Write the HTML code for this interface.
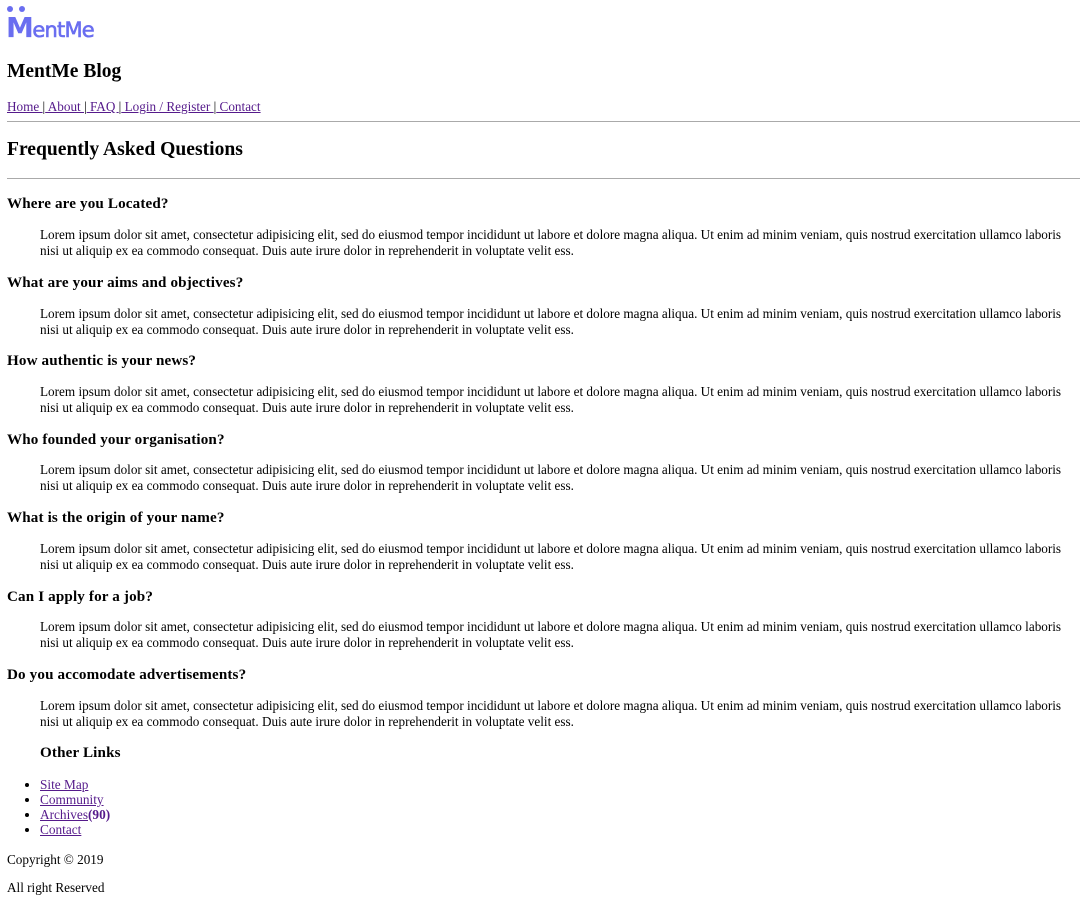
<!DOCTYPE html>
<html><head><meta charset="utf-8"><style>
body{margin:0;background:#fff;font-family:"Liberation Serif",serif;color:#000;font-size:13px;}
.a{position:absolute;white-space:nowrap;line-height:16px;}
a{color:#551a8b;}
.h{position:absolute;left:7px;white-space:nowrap;line-height:16px;font-size:15.1px;font-weight:bold;letter-spacing:0.15px}
.p{position:absolute;left:40px;width:1030px;line-height:15.5px;font-size:13.2px;}
hr{position:absolute;left:7px;width:1073px;margin:0;border:0;border-top:1px solid #aaa;height:0;}
ul{position:absolute;left:0;top:777px;margin:0;padding-left:40px;line-height:15px;font-size:13.3px;}
</style></head><body>
<div class="a" style="left:6px;top:4px;width:95px;height:40px;">
<span style="position:absolute;left:1px;top:2px;width:6px;height:6px;border-radius:50%;background:#6a6ef0"></span>
<span style="position:absolute;left:13px;top:2px;width:6px;height:6px;border-radius:50%;background:#6a6ef0"></span>
<span style="position:absolute;left:0;top:7px;font-family:'DejaVu Sans',sans-serif;font-weight:bold;font-size:28px;line-height:34px;color:#6a6ef0;letter-spacing:-1.5px">M<span style="font-weight:normal;font-size:21px;letter-spacing:-0.8px;-webkit-text-stroke:0.6px #6a6ef0">entMe</span></span>
</div>
<div class="a" style="left:7px;top:61px;font-size:19.5px;line-height:22px;font-weight:bold">MentMe Blog</div>
<div class="a" style="left:7px;top:99px;font-size:13.2px"><a href="#">Home </a>|<a href="#"> About </a>|<a href="#"> FAQ </a>|<a href="#"> Login / Register </a>|<a href="#"> Contact</a></div>
<hr style="top:121px">
<div class="a" style="left:7px;top:139px;font-size:19.6px;line-height:22px;font-weight:bold">Frequently Asked Questions</div>
<hr style="top:178px">

<div class="h" style="top:196px">Where are you Located?</div>
<div class="p" style="top:227px">Lorem ipsum dolor sit amet, consectetur adipisicing elit, sed do eiusmod tempor incididunt ut labore et dolore magna aliqua. Ut enim ad minim veniam, quis nostrud exercitation ullamco laboris nisi ut aliquip ex ea commodo consequat. Duis aute irure dolor in reprehenderit in voluptate velit ess.</div>
<div class="h" style="top:275px">What are your aims and objectives?</div>
<div class="p" style="top:306px">Lorem ipsum dolor sit amet, consectetur adipisicing elit, sed do eiusmod tempor incididunt ut labore et dolore magna aliqua. Ut enim ad minim veniam, quis nostrud exercitation ullamco laboris nisi ut aliquip ex ea commodo consequat. Duis aute irure dolor in reprehenderit in voluptate velit ess.</div>
<div class="h" style="top:353px">How authentic is your news?</div>
<div class="p" style="top:384px">Lorem ipsum dolor sit amet, consectetur adipisicing elit, sed do eiusmod tempor incididunt ut labore et dolore magna aliqua. Ut enim ad minim veniam, quis nostrud exercitation ullamco laboris nisi ut aliquip ex ea commodo consequat. Duis aute irure dolor in reprehenderit in voluptate velit ess.</div>
<div class="h" style="top:432px">Who founded your organisation?</div>
<div class="p" style="top:462px">Lorem ipsum dolor sit amet, consectetur adipisicing elit, sed do eiusmod tempor incididunt ut labore et dolore magna aliqua. Ut enim ad minim veniam, quis nostrud exercitation ullamco laboris nisi ut aliquip ex ea commodo consequat. Duis aute irure dolor in reprehenderit in voluptate velit ess.</div>
<div class="h" style="top:510px">What is the origin of your name?</div>
<div class="p" style="top:541px">Lorem ipsum dolor sit amet, consectetur adipisicing elit, sed do eiusmod tempor incididunt ut labore et dolore magna aliqua. Ut enim ad minim veniam, quis nostrud exercitation ullamco laboris nisi ut aliquip ex ea commodo consequat. Duis aute irure dolor in reprehenderit in voluptate velit ess.</div>
<div class="h" style="top:589px">Can I apply for a job?</div>
<div class="p" style="top:619px">Lorem ipsum dolor sit amet, consectetur adipisicing elit, sed do eiusmod tempor incididunt ut labore et dolore magna aliqua. Ut enim ad minim veniam, quis nostrud exercitation ullamco laboris nisi ut aliquip ex ea commodo consequat. Duis aute irure dolor in reprehenderit in voluptate velit ess.</div>
<div class="h" style="top:667px">Do you accomodate advertisements?</div>
<div class="p" style="top:698px">Lorem ipsum dolor sit amet, consectetur adipisicing elit, sed do eiusmod tempor incididunt ut labore et dolore magna aliqua. Ut enim ad minim veniam, quis nostrud exercitation ullamco laboris nisi ut aliquip ex ea commodo consequat. Duis aute irure dolor in reprehenderit in voluptate velit ess.</div>

<div class="h" style="left:40px;top:745px">Other Links</div>
<ul>
<li><a href="#">Site Map</a></li>
<li><a href="#">Community</a></li>
<li><a href="#">Archives</a><b style="color:#551a8b">(90)</b></li>
<li><a href="#">Contact</a></li>
</ul>
<div class="a" style="left:7px;top:852px;font-size:13.2px">Copyright © 2019</div>
<div class="a" style="left:7px;top:880px;font-size:13.2px">All right Reserved</div>
</body></html>
